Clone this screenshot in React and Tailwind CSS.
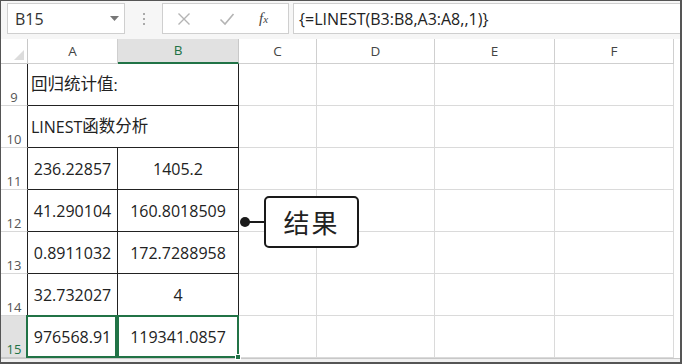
const ROWS = [
  { n: 9, merged: "cn1" },
  { n: 10, merged: "cn2" },
  { n: 11, a: "236.22857", b: "1405.2" },
  { n: 12, a: "41.290104", b: "160.8018509" },
  { n: 13, a: "0.8911032", b: "172.7288958" },
  { n: 14, a: "32.732027", b: "4" },
  { n: 15, a: "976568.91", b: "119341.0857", selected: true },
];

const COLS = ["A", "B", "C", "D", "E", "F"];

function Toolbar() {
  return (
    <div className="h-[38px] bg-[#f6f6f6] flex items-start pt-[2px] pl-[6px] gap-0">
      <div className="w-[118px] h-[31px] bg-white border border-[#cfcfcf] flex items-center justify-between pl-[7px] pr-[5px]">
        <span className="text-[16px] text-[#333]">B15</span>
        <svg width="9" height="5" viewBox="0 0 9 5">
          <path d="M0 0 L9 0 L4.5 5 Z" fill="#777" />
        </svg>
      </div>
      <div className="w-[37px] h-[31px] flex flex-col items-center justify-center gap-[3px]">
        <span className="w-[2px] h-[2px] bg-[#aaa]" />
        <span className="w-[2px] h-[2px] bg-[#aaa]" />
        <span className="w-[2px] h-[2px] bg-[#aaa]" />
      </div>
      <div className="w-[127px] h-[31px] bg-white border border-[#cfcfcf] flex items-center">
        <svg className="ml-[14px]" width="14" height="14" viewBox="0 0 14 14">
          <path d="M1.5 1.5 L12.5 12.5 M12.5 1.5 L1.5 12.5" stroke="#b4b4b4" strokeWidth="1.4" />
        </svg>
        <svg className="ml-[28px]" width="16" height="14" viewBox="0 0 16 14">
          <path d="M1.5 7.5 L6 12 L14.5 2" stroke="#b4b4b4" strokeWidth="1.6" fill="none" />
        </svg>
        <span className="ml-[24px] font-['Liberation_Serif',serif] italic text-[15px] text-[#444] leading-none">
          f<span className="text-[11px]">x</span>
        </span>
      </div>
      <div className="flex-1 h-[31px] ml-[4px] bg-white border border-r-0 border-[#cfcfcf] flex items-center pl-[5px]">
        <span className="text-[16px] text-[#222]">{"{=LINEST(B3:B8,A3:A8,,1)}"}</span>
      </div>
    </div>
  );
}

function HeaderRow() {
  return (
    <>
      <div className="bg-white border-r border-b border-[#c8c8c8] flex items-end justify-end pr-[3px] pb-[3px]">
        <svg width="10" height="10" viewBox="0 0 10 10">
          <path d="M10 0 L10 10 L0 10 Z" fill="#dcdcdc" />
        </svg>
      </div>
      {COLS.map((c) => (
        <div
          key={c}
          className={
            c === "B"
              ? "bg-[#e1e1e1] border-r border-[#c8c8c8] border-b-2 border-b-[#217346] flex items-center justify-center text-[13.5px] text-[#217346]"
              : "bg-white border-r border-b border-[#cfcfcf] flex items-center justify-center text-[13.5px] text-[#444]"
          }
        >
          {c}
        </div>
      ))}
    </>
  );
}

function CellText({ kind }) {
  if (kind === "cn1")
    return (
      <>
        <span className="text-[16.5px]">回归统计值</span>:
      </>
    );
  return (
    <>
      LINEST<span className="text-[16.5px]">函数分析</span>
    </>
  );
}

function Row({ row }) {
  const head = row.selected
    ? "bg-[#e1e1e1] text-[#217346] border-r border-b border-[#c8c8c8]"
    : "bg-white text-[#555] border-b border-[#d8d8d8] border-r border-r-[#222]";
  return (
    <>
      <div className={`${head} flex items-end justify-center pb-[1px] text-[13px] leading-none`}>
        {row.n}
      </div>
      {row.merged ? (
        <div className="col-span-2 border-r border-b border-[#222] flex items-center pl-[3px] text-[#222]">
          <CellText kind={row.merged} />
        </div>
      ) : (
        <>
          <div className="relative border-r border-b border-[#222] flex items-center justify-center text-[#222]">
            {row.a}
            {row.selected && (
              <div className="absolute -left-[2px] -top-[1px] right-0 -bottom-[1px] border-2 border-[#217346]" />
            )}
          </div>
          <div className="relative border-r border-b border-[#222] flex items-center justify-center text-[#222]">
            {row.b}
            {row.selected && (
              <>
                <div className="absolute -left-[1px] -top-[1px] -right-[1px] -bottom-[1px] border-2 border-[#217346]" />
                <div className="absolute -right-[3px] -bottom-[3px] w-[6px] h-[6px] bg-[#217346] border border-white" />
              </>
            )}
          </div>
        </>
      )}
      {["C", "D", "E", "F"].map((c) => (
        <div key={c} className="border-r border-b border-[#dadada]" />
      ))}
    </>
  );
}

function Callout() {
  return (
    <>
      <div className="absolute left-[239px] top-[216px] w-[10px] h-[10px] rounded-full bg-[#1a1a1a]" />
      <div className="absolute left-[246px] top-[220px] w-[18px] h-[2px] bg-[#1a1a1a]" />
      <div className="absolute left-[263px] top-[195px] w-[95px] h-[52px] bg-white border-2 border-[#1a1a1a] rounded-[5px] flex items-center justify-center">
        <span className="text-[26px] tracking-[2px] text-[#222] font-['Noto_Sans_CJK_SC',sans-serif] leading-none">
          结果
        </span>
      </div>
    </>
  );
}

export default function App() {
  return (
    <div className="relative w-[682px] h-[364px] overflow-hidden bg-white border-t border-l border-r-2 border-b-2 border-[#555] flex flex-col font-['Open_Sans','Noto_Sans_CJK_SC',sans-serif] text-[16px]">
      <Toolbar />
      <div className="flex flex-1">
        <div className="grid grid-cols-[27px_90px_121px_78px_118px_120px_119px] grid-rows-[25px_repeat(7,42px)]">
          <HeaderRow />
          {ROWS.map((r) => (
            <Row key={r.n} row={r} />
          ))}
        </div>
        <div className="flex-1 bg-white" />
      </div>
      <div className="h-[4px] border-t border-[#c8c8c8] bg-[#f0f0f0]" />
      <Callout />
    </div>
  );
}
